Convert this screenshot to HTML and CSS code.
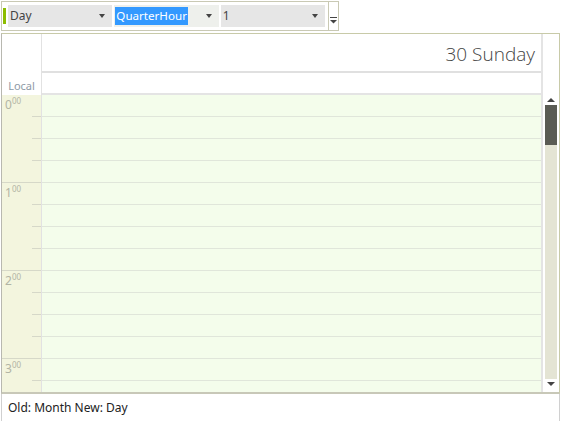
FILE: index.html
```html
<!DOCTYPE html>
<html>
<head>
<meta charset="utf-8">
<link rel="stylesheet" href="styles.css">
</head>
<body>
<div class="toolbar">
  <div class="grip"></div>
  <div class="combo"><span class="val">Day</span><span class="arr"></span></div>
  <div class="combo light"><span class="val sel">QuarterHour</span><span class="arr"></span></div>
  <div class="combo"><span class="val">1</span><span class="arr"></span></div>
  <div class="overflow">
    <svg width="7" height="8" viewBox="0 0 7 8"><rect x="0" y="1" width="7" height="1" fill="#444"/><path d="M0 4 L7 4 L3.5 7.5 Z" fill="#444"/></svg>
  </div>
</div>

<div class="sched">
  <div class="head">
    <div class="corner"><span class="local">Local</span></div>
    <div class="daycol">
      <div class="date">30 Sunday</div>
      <div class="allday"></div>
    </div>
    <div class="sbspace"></div>
  </div>
  <div class="body">
    <div class="timecol">
      <div class="hour"><span class="h">0</span><span class="m">00</span></div>
      <div class="hour"><span class="h">1</span><span class="m">00</span></div>
      <div class="hour"><span class="h">2</span><span class="m">00</span></div>
      <div class="hour"><span class="h">3</span><span class="m">00</span></div>
    </div>
    <div class="daybody"></div>
    <div class="scrollbar">
      <div class="up"></div>
      <div class="track"><div class="thumb"></div></div>
      <div class="down"></div>
    </div>
  </div>
</div>

<div class="status">Old: Month New: Day</div>
</body>
</html>
```

FILE: styles.css
```css
html, body {
  margin: 0;
  padding: 0;
  background: #ffffff;
  font-family: "Noto Sans", "Open Sans", sans-serif;
  color: #333;
}

.toolbar {
  margin: 1px 0 0 1px;
  width: 336px;
  height: 28px;
  border: 1px solid #c9c9b4;
  display: flex;
  align-items: center;
}

.grip {
  width: 3px;
  height: 16px;
  background: #8cbd00;
  margin: 0 2px 0 1px;
}

.combo {
  width: 105px;
  height: 22px;
  background: #e6e6e6;
  margin-right: 2px;
  display: flex;
  align-items: center;
  justify-content: space-between;
  box-sizing: border-box;
  padding: 0 7px 0 2px;
  font-size: 12px;
  color: #444;
}

.combo.light {
  background: #eef0ec;
  padding-left: 1px;
}

.val {
  line-height: 18px;
}

.val.sel {
  background: #3399ff;
  color: #ffffff;
  padding: 0 1px;
  font-size: 11.6px;
}

.arr {
  width: 0;
  height: 0;
  border-left: 3px solid transparent;
  border-right: 3px solid transparent;
  border-top: 4px solid #444;
}

.overflow {
  margin-left: 1px;
  border-left: 1px solid #c9c9b4;
  height: 28px;
  width: 10px;
  display: flex;
  align-items: flex-end;
  justify-content: center;
  box-sizing: border-box;
  padding-bottom: 6px;
}

.sched {
  margin: 2px 0 0 1px;
  width: 557px;
  height: 358px;
  border: 1px solid #c8caa8;
  border-left-color: #b8b8b0;
  border-bottom: 2px solid #c8c8b8;
  display: flex;
  flex-direction: column;
}

.head {
  display: flex;
  height: 61px;
}

.corner {
  width: 39px;
  border-right: 1px solid #e2e2e2;
  display: flex;
  align-items: flex-end;
  justify-content: center;
}

.local {
  font-size: 11px;
  color: #8e9aa6;
  line-height: 16px;
  margin-bottom: 1px;
}

.daycol {
  flex: 1;
  display: flex;
  flex-direction: column;
  border-right: 2px solid #e4e4e4;
}

.date {
  height: 37px;
  border-bottom: 2px solid #e0e0e0;
  text-align: right;
  font-family: "Open Sans", sans-serif;
  font-weight: 300;
  font-size: 19px;
  color: #444;
  line-height: 40px;
  padding-right: 6px;
}

.allday {
  flex: 1;
  border-bottom: 2px solid #e4e4e4;
}

.sbspace {
  width: 16px;
}

.body {
  flex: 1;
  display: flex;
  overflow: hidden;
}

.timecol {
  width: 39px;
  border-right: 1px solid #e2e2e2;
  background-color: #f3f5de;
  background-image:
    linear-gradient(#f3f5de, #f3f5de),
    repeating-linear-gradient(to bottom, transparent 0, transparent 21px, #d6d8c8 21px, #d6d8c8 22px);
  background-size: 30px 100%, 100% 100%;
  background-repeat: no-repeat;
}

.hour {
  height: 85px;
  border-bottom: 1px solid #d6d8c8;
  padding: 2px 0 0 3px;
  color: #b2b4a4;
  line-height: 12px;
}

.h {
  font-size: 12px;
}

.m {
  font-size: 8px;
  vertical-align: top;
  line-height: 8px;
}

.daybody {
  flex: 1;
  background-color: #f4fdeb;
  background-image: repeating-linear-gradient(to bottom, transparent 0, transparent 21px, #e0e6da 21px, #e0e6da 22px);
  border-right: 2px solid #e4e4e4;
}

.scrollbar {
  width: 16px;
  display: flex;
  flex-direction: column;
  align-items: center;
}

.up, .down {
  height: 10px;
  width: 12px;
  display: flex;
  align-items: center;
  justify-content: center;
}

.up::before {
  content: "";
  border-left: 4px solid transparent;
  border-right: 4px solid transparent;
  border-bottom: 4px solid #444;
}

.down::before {
  content: "";
  border-left: 4px solid transparent;
  border-right: 4px solid transparent;
  border-top: 4px solid #444;
}

.down {
  margin-bottom: 3px;
}

.track {
  flex: 1;
  width: 12px;
  background: #e4e4d4;
}

.thumb {
  height: 40px;
  background: #5a5b54;
}

.status {
  margin-left: 1px;
  width: 557px;
  height: 27px;
  border: 1px solid #d0d0d0;
  border-top: none;
  font-size: 12px;
  line-height: 27px;
  text-indent: 6px;
  color: #222;
}
```
